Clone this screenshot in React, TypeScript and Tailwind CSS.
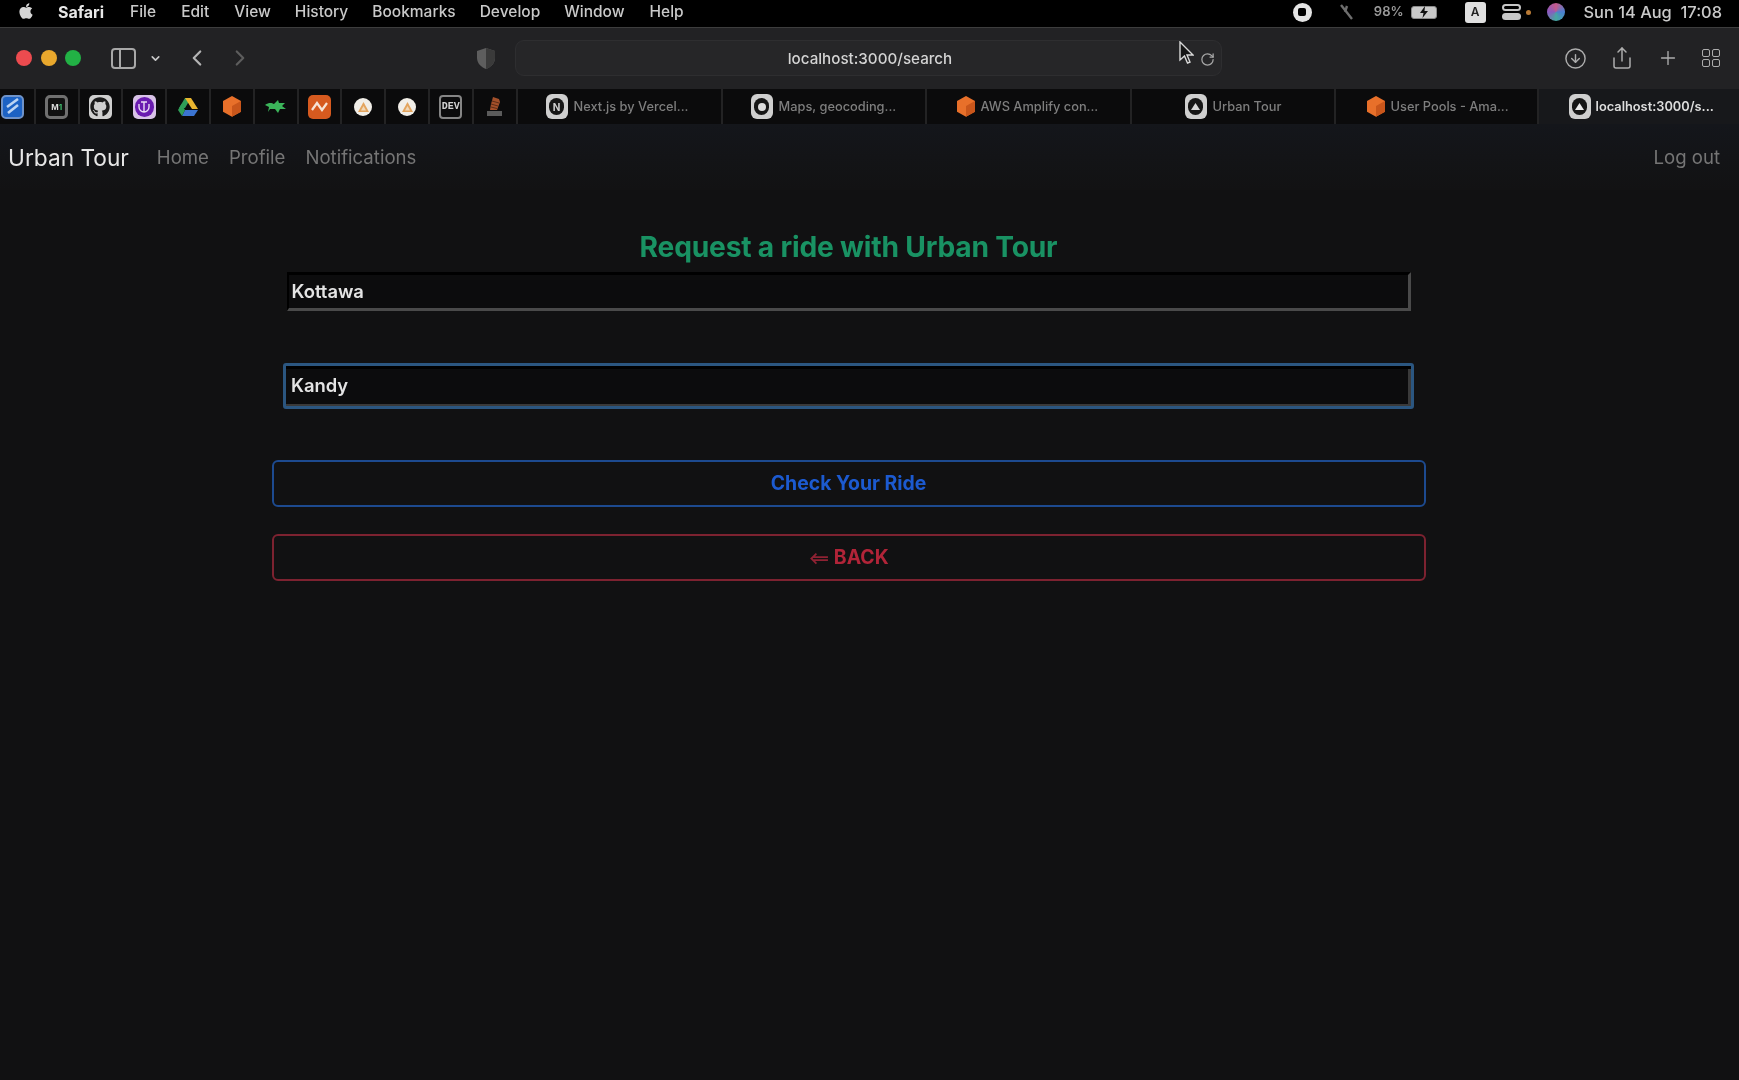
import { ChevronDown, ChevronLeft, ChevronRight, CircleArrowDown, Plus, RotateCw, Share } from 'lucide-react'
import { FaApple, FaGithub } from 'react-icons/fa'

const MENU = [
    { label: 'Safari', className: 'font-bold text-[16px] text-[#e8e8e8] ml-[23px]' },
    { label: 'File', className: 'ml-[26px]' },
    { label: 'Edit', className: 'ml-[25px]' },
    { label: 'View', className: 'ml-[25px]' },
    { label: 'History', className: 'ml-[24px]' },
    { label: 'Bookmarks', className: 'ml-[24px]' },
    { label: 'Develop', className: 'ml-[24px]' },
    { label: 'Window', className: 'ml-[24px]' },
    { label: 'Help', className: 'ml-[25px]' },
]

function Cube({ size = 18 }: { size?: number }) {
    return (
        <svg width={size} height={size * 1.15} viewBox="0 0 20 23">
            <path d="M10 0 L20 5.5 V17.5 L10 23 L0 17.5 V5.5 Z" fill="#e8702a" />
            <path d="M10 11 L20 5.5 V17.5 L10 23 Z" fill="#c9561b" />
        </svg>
    )
}

function AppTile({ className, children }: { className: string; children?: React.ReactNode }) {
    return <div className={`w-[23px] h-[24px] rounded-[5px] flex items-center justify-center overflow-hidden ${className}`}>{children}</div>
}

function ServiceTile({ children }: { children: React.ReactNode }) {
    return (
        <div className="w-[22px] h-[25px] rounded-[6px] bg-[#cfcfcf] flex items-center justify-center shrink-0">
            <div className="w-[15px] h-[17px] rounded-full bg-[#161616] flex items-center justify-center">{children}</div>
        </div>
    )
}

function AmplifyDot() {
    return (
        <div className="w-[18px] h-[18px] rounded-full bg-[#f1eee8] flex items-center justify-center">
            <svg width="11" height="10" viewBox="0 0 11 10">
                <path d="M5.5 0 L11 10 H0 Z" fill="#e3a45e" />
                <path d="M5.5 4 L8 8.5 H3 Z" fill="#f1d8b8" />
            </svg>
        </div>
    )
}

const PINNED = [
    <AppTile className="bg-[#1c62c4] border-2 border-[#6f93c9]">
        <svg width="15" height="17" viewBox="0 0 15 17"><path d="M13 1 L2 9 M13 7 L3 15" stroke="#bcd4f2" strokeWidth="2.6" /></svg>
    </AppTile>,
    <AppTile className="bg-[#111] border-[3px] border-[#707070]">
        <span className="text-[8px] font-bold leading-none text-[#dcdcdc] font-['Inter',sans-serif]">M<span className="text-[#3fbf6e]">1</span></span>
    </AppTile>,
    <AppTile className="bg-[#cfcfcf]"><FaGithub className="text-[#1b1b1b] text-[20px]" /></AppTile>,
    <AppTile className="bg-[#d9c3e8]">
        <div className="w-[19px] h-[20px] rounded-full bg-[#6a1bb0] flex items-center justify-center">
            <svg width="12" height="13" viewBox="0 0 12 13" fill="none" stroke="#e8d9f4" strokeWidth="1.4">
                <path d="M1 4 V7 A5 5 0 0 0 11 7 V4 M3 2 H9 M6 2 V12" />
            </svg>
        </div>
    </AppTile>,
    <svg width="20" height="18" viewBox="0 0 20 18">
        <path d="M7 0 H13 L7 10 H1 Z" fill="#2f9e58" />
        <path d="M13 0 L20 11 H14 L7 0 Z" fill="#e9b52f" />
        <path d="M4 18 L7 12 H20 L16 18 Z" fill="#3b74d1" />
        <path d="M0 12 L3.5 6 L7 12 L4 18 Z" fill="#2f9e58" />
    </svg>,
    <Cube />,
    <svg width="21" height="15" viewBox="0 0 21 15">
        <path d="M0 6 C4 3 7 4 9 5 L13 1 L14 4 L20 4 L17 7 L21 10 L15 10 L13 14 L10 10 L5 10 L3 13 L4 8 Z" fill="#3bb55a" />
    </svg>,
    <AppTile className="bg-[#d65a1f]">
        <svg width="17" height="11" viewBox="0 0 17 11" fill="none" stroke="#f6e3d5" strokeWidth="2.2"><path d="M1 9 L6 2 L11 9 L16 2" /></svg>
    </AppTile>,
    <AmplifyDot />,
    <AmplifyDot />,
    <div className="w-[23px] h-[24px] rounded-[4px] border-[2px] border-[#858585] flex items-center justify-center text-[10px] leading-none font-bold text-[#d4d4d4] font-['Liberation_Mono',monospace]">DEV</div>,
    <svg width="15" height="21" viewBox="0 0 15 21">
        <path d="M6 1 L12 3 L13 6 L10 14 L3 14 L4 8 Z" fill="#a3502a" />
        <path d="M5 5 L12 7 M4 8 L11 10 M4 11 L10 12.5" stroke="#5d2c16" strokeWidth="1" />
        <path d="M0 15 H15 V20 H0 Z" fill="#5b5b5b" />
    </svg>,
]

function Triangle({ color = '#d8d8d8', size = 9 }: { color?: string; size?: number }) {
    return <svg width={size} height={size} viewBox="0 0 10 10"><path d="M5 1 L10 9 H0 Z" fill={color} /></svg>
}

const TABS = [
    { title: 'Next.js by Vercel...', icon: <ServiceTile><span className="text-[10px] font-bold text-[#cfcfcf] leading-none font-['Inter',sans-serif]">N</span></ServiceTile>, w: 'w-[205px]', pl: 'pl-[28px]' },
    { title: 'Maps, geocoding...', icon: <ServiceTile><div className="w-[8px] h-[8px] rounded-full bg-[#dcdcdc]" /></ServiceTile>, w: 'w-[204px]', pl: 'pl-[28px]' },
    { title: 'AWS Amplify con...', icon: <Cube />, w: 'w-[205px]', pl: 'pl-[30px]' },
    { title: 'Urban Tour', icon: <ServiceTile><Triangle /></ServiceTile>, w: 'w-[204px]', pl: 'pl-[53px]' },
    { title: 'User Pools - Ama...', icon: <Cube />, w: 'w-[203px]', pl: 'pl-[31px]' },
]

export default function App() {
    return (
        <div className="w-[1739px] h-[1080px] overflow-hidden bg-[#111112] font-['Inter',sans-serif] flex flex-col blur-[0.4px]">
            {/* Mac menu bar */}
            <div className="h-[27px] pb-[3px] bg-black flex items-center text-[15.5px] font-medium text-[#c9c9c9] shrink-0">
                <FaApple className="ml-[17px] text-[#d6d6d6] text-[18px] -mt-[3px]" />
                {MENU.map(item => (
                    <span key={item.label} className={item.className}>{item.label}</span>
                ))}
                <div className="ml-auto flex items-center">
                    <div className="w-[19px] h-[19px] rounded-full bg-[#e4e4e4] flex items-center justify-center">
                        <div className="w-[8px] h-[8px] rounded-[2px] bg-black" />
                    </div>
                    <svg className="ml-[27px]" width="15" height="16" viewBox="0 0 15 16" stroke="#6e6e6e" strokeWidth="2.4"><path d="M2 1 L13 15 M8 2 L6 8" /></svg>
                    <span className="ml-[20px] text-[13px] font-semibold text-[#9a9a9a]">98%</span>
                    <div className="ml-[7px] w-[26px] h-[13px] rounded-[3px] border border-[#8a8a8a] bg-[#c9c9c9] flex items-center justify-center">
                        <svg width="10" height="12" viewBox="0 0 10 12"><path d="M6 0 L1 7 H4.5 L3.5 12 L9 5 H5.5 Z" fill="#111" /></svg>
                    </div>
                    <div className="ml-[28px] w-[21px] h-[21px] rounded-[3px] bg-[#e0e0e0] flex items-center justify-center text-[12px] font-semibold text-[#222]">A</div>
                    <div className="ml-[16px] w-[19px] flex flex-col gap-[2px]">
                        <div className="h-[7px] rounded-full border-2 border-[#c8c8c8]" />
                        <div className="h-[7px] rounded-full bg-[#c8c8c8]" />
                    </div>
                    <div className="ml-[5px] w-[5px] h-[5px] rounded-full bg-[#b97a35]" />
                    <div className="ml-[16px] w-[18px] h-[18px] rounded-full bg-[conic-gradient(#c65a8a,#4a7fd0,#45a8a0,#8a5ac0,#c65a8a)]" />
                    <span className="ml-[19px] mr-[17px] text-[16.4px] font-medium text-[#c9c9c9] whitespace-nowrap">Sun 14 Aug&nbsp;&nbsp;17:08</span>
                </div>
            </div>

            {/* Safari toolbar */}
            <div className="h-[62px] pb-[1px] bg-[#222224] border-t border-[#3d3d3d] flex items-center shrink-0 relative">
                <div className="ml-[16px] flex gap-[8.5px]">
                    <div className="w-[16px] h-[16px] rounded-full bg-[#ec4b4f]" />
                    <div className="w-[16px] h-[16px] rounded-full bg-[#e9a82d]" />
                    <div className="w-[16px] h-[16px] rounded-full bg-[#22b145]" />
                </div>
                <div className="ml-[30px] w-[25px] h-[21px] rounded-[4px] border-2 border-[#a8a8a8] flex">
                    <div className="w-[8px] border-r-2 border-[#a8a8a8]" />
                </div>
                <ChevronDown className="ml-[13px] text-[#c8c8c8]" size={13} strokeWidth={3} />
                <ChevronLeft className="ml-[22px] text-[#b4b4b4]" size={26} strokeWidth={2} />
                <ChevronRight className="ml-[17px] text-[#5d5d5d]" size={26} strokeWidth={2} />
                <svg className="ml-[224px]" width="18" height="21" viewBox="0 0 18 21">
                    <path d="M9 0 L18 3 V10 C18 15 14 19 9 21 C4 19 0 15 0 10 V3 Z" fill="#5e5e5e" />
                    <path d="M9 0 L18 3 V10 C18 15 14 19 9 21 Z" fill="#3a3a3a" />
                </svg>
                <div className="ml-[20px] w-[707px] h-[36px] rounded-[9px] bg-[#262628] border border-[#2e2e30] flex items-center justify-center relative">
                    <span className="text-[15.2px] font-medium text-[#d4d4d4] pl-[3px] mt-[3px]">localhost:3000/search</span>
                    <RotateCw className="absolute right-[6px] top-[11px] text-[#a8a8a8]" size={15} strokeWidth={2} />
                </div>
                <div className="ml-auto mr-[19px] flex items-center gap-[23px] text-[#adadad]">
                    <CircleArrowDown size={23} strokeWidth={1.5} />
                    <Share size={24} strokeWidth={1.5} />
                    <Plus size={22} strokeWidth={1.5} />
                    <div className="grid grid-cols-2 gap-[2px]">
                        <div className="w-[8px] h-[8px] rounded-[2px] border-[1.5px] border-[#adadad]" />
                        <div className="w-[8px] h-[8px] rounded-[2px] border-[1.5px] border-[#adadad]" />
                        <div className="w-[8px] h-[8px] rounded-[2px] border-[1.5px] border-[#adadad]" />
                        <div className="w-[8px] h-[8px] rounded-[2px] border-[1.5px] border-[#adadad]" />
                    </div>
                </div>
                {/* pointer over the address bar */}
                <svg className="absolute left-[1178px] top-[13px]" width="16" height="24" viewBox="0 0 16 24">
                    <path d="M2 1 V19 L6.5 15 L9.5 22 L12 21 L9 14 L15 14 Z" fill="#161616" stroke="#d8d8d8" strokeWidth="1.4" />
                </svg>
            </div>

            {/* Tab bar */}
            <div className="h-[35px] bg-[#0b0b0c] flex shrink-0 -ml-[8px] w-[1747px]">
                {PINNED.map((icon, i) => (
                    <div key={i} className="w-[43.8px] border-r-2 border-[#232324] flex items-center justify-center shrink-0">{icon}</div>
                ))}
                {TABS.map(tab => (
                    <div key={tab.title} className={`${tab.w} ${tab.pl} border-r-2 border-[#232324] flex items-center gap-[6px] shrink-0`}>
                        {tab.icon}
                        <span className="text-[12.8px] font-medium text-[#7e7e7e] whitespace-nowrap pt-[1px]">{tab.title}</span>
                    </div>
                ))}
                <div className="flex-1 bg-[#17181b] pl-[30px] flex items-center gap-[5px]">
                    <ServiceTile><Triangle color="#ececec" /></ServiceTile>
                    <span className="text-[12.8px] font-semibold text-[#dddddd] whitespace-nowrap pt-[1px]">localhost:3000/s...</span>
                </div>
            </div>

            {/* App navbar */}
            <nav className="h-[66px] pt-[2px] bg-gradient-to-b from-[#14161b] to-[#121213] flex items-center px-[8px] shrink-0 text-[18.6px]">
                <span className="text-[22.7px] text-[#e6e6e6]">Urban Tour</span>
                <span className="ml-[28px] text-[#757575]">Home</span>
                <span className="ml-[20px] text-[#757575]">Profile</span>
                <span className="ml-[20px] text-[#757575]">Notifications</span>
                <span className="ml-auto mr-[11px] text-[#757575]">Log out</span>
            </nav>

            {/* Search form */}
            <main className="flex-1 flex flex-col items-center">
                <div className="w-[1154px] ml-[-42px] flex flex-col items-center">
                    <h1 className="mt-[40px] h-[34px] leading-[34px] text-[28.2px] font-bold text-[#199263] tracking-[-0.2px] text-center">Request a ride with Urban Tour</h1>
                    <div className="mt-[8px] w-[1124px] h-[39px] bg-[#0c0c0d] border-t-[3px] border-l-[2px] border-t-black border-l-black border-r-[3px] border-b-[3px] border-r-[#4a4a4a] border-b-[#4a4a4a] flex items-center pl-[3px] pt-[1px]">
                        <span className="text-[18.4px] font-semibold text-[#e4e4e4]">Kottawa</span>
                    </div>
                    <div className="mt-[52px] w-[1131px] h-[46px] rounded-[3px] border-[3px] border-[#2b5680] bg-[#0c0c0d] shadow-[inset_0_3px_0_#000,inset_-3px_-2px_0_#3a3a3a] flex items-center pl-[5px]">
                        <span className="text-[18.4px] font-semibold text-[#e4e4e4]">Kandy</span>
                    </div>
                    <button className="mt-[51px] w-full h-[47px] rounded-[6px] border-2 border-[#1d4a8f] text-[19.4px] font-bold text-[#1c5ad0]">Check Your Ride</button>
                    <button className="mt-[27px] w-full h-[47px] rounded-[6px] border-2 border-[#7d2230] text-[19.4px] font-bold text-[#b12438]">
                        <span className="text-[16px] mr-[4px] text-[#8f2233]">⟸</span>BACK
                    </button>
                </div>
            </main>
        </div>
    )
}
